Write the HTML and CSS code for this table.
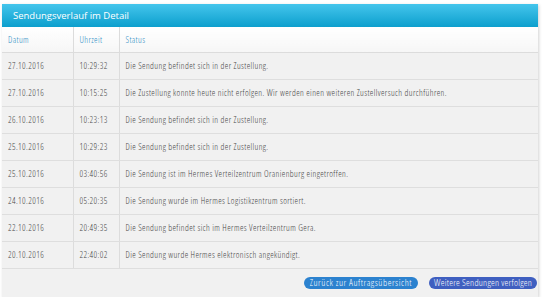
FILE: index.html
```html
<!DOCTYPE html>
<html lang="de">
<head>
<meta charset="utf-8">
<link rel="stylesheet" href="styles.css">
</head>
<body>
<div class="panel">
  <div class="head">Sendungsverlauf im Detail</div>
  <table class="hist">
    <colgroup><col class="c-date"><col class="c-time"><col></colgroup>
    <thead>
      <tr><th>Datum</th><th>Uhrzeit</th><th>Status</th></tr>
    </thead>
    <tbody>
      <tr><td>27.10.2016</td><td>10:29:32</td><td>Die Sendung befindet sich in der Zustellung.</td></tr>
      <tr><td>27.10.2016</td><td>10:15:25</td><td>Die Zustellung konnte heute nicht erfolgen. Wir werden einen weiteren Zustellversuch durchführen.</td></tr>
      <tr><td>26.10.2016</td><td>10:23:13</td><td>Die Sendung befindet sich in der Zustellung.</td></tr>
      <tr><td>25.10.2016</td><td>10:29:23</td><td>Die Sendung befindet sich in der Zustellung.</td></tr>
      <tr><td>25.10.2016</td><td>03:40:56</td><td>Die Sendung ist im Hermes Verteilzentrum Oranienburg eingetroffen.</td></tr>
      <tr><td>24.10.2016</td><td>05:20:35</td><td>Die Sendung wurde im Hermes Logistikzentrum sortiert.</td></tr>
      <tr><td>22.10.2016</td><td>20:49:35</td><td>Die Sendung befindet sich im Hermes Verteilzentrum Gera.</td></tr>
      <tr><td>20.10.2016</td><td>22:40:02</td><td>Die Sendung wurde Hermes elektronisch angekündigt.</td></tr>
    </tbody>
  </table>
  <div class="foot">
    <a class="btn btn-back" href="#">Zurück zur Auftragsübersicht</a>
    <a class="btn btn-more" href="#">Weitere Sendungen verfolgen</a>
  </div>
</div>
</body>
</html>
```
FILE: styles.css
```css
html, body { margin: 0; padding: 0; background: #fff; }
body { font-family: "Open Sans", "Noto Sans", sans-serif; }
.panel {
  margin: 4px 0 0 2px;
  width: 536px;
  background: #f1f1f1;
  box-shadow: 1px 1px 3px rgba(0,0,0,0.18);
}
.head {
  height: 23px;
  line-height: 23px;
  padding-left: 11px;
  color: #fff;
  font-size: 9.5px;
  background: linear-gradient(#44c5ec, #0c9fcd);
}
.hist {
  width: 100%;
  border-collapse: collapse;
  table-layout: fixed;
  font-size: 8.8px;
  font-weight: 350;
  font-stretch: condensed;
  letter-spacing: 0.4px;
}
.c-date { width: 71px; }
.c-time { width: 46px; }
.hist th {
  height: 25px;
  text-align: left;
  font-weight: 350;
  color: #2a8cc4;
  background: linear-gradient(#ffffff, #f6f6f6);
  border-bottom: 1px solid #dcdcdc;
  padding: 0 0 0 6px;
}
.hist td {
  height: 26px;
  padding: 0 0 0 6px;
  color: #444;
  border-bottom: 1px solid #dedede;
  white-space: nowrap;
}
.hist th + th, .hist td + td { border-left: 1px solid #dcdcdc; }
.foot {
  height: 28px;
  display: flex;
  align-items: center;
  justify-content: flex-end;
  gap: 11px;
  padding-right: 1px;
}
.btn {
  display: inline-block;
  height: 12px;
  line-height: 12px;
  padding: 0 6px;
  border-radius: 7px;
  color: #fff;
  font-size: 9.5px;
  font-weight: 350;
  font-stretch: condensed;
  letter-spacing: 0.55px;
  text-decoration: none;
}
.btn-back { background: #2c82cf; }
.btn-more { background: #3f5fc0; padding: 0 5px; letter-spacing: 0.25px; }
```
